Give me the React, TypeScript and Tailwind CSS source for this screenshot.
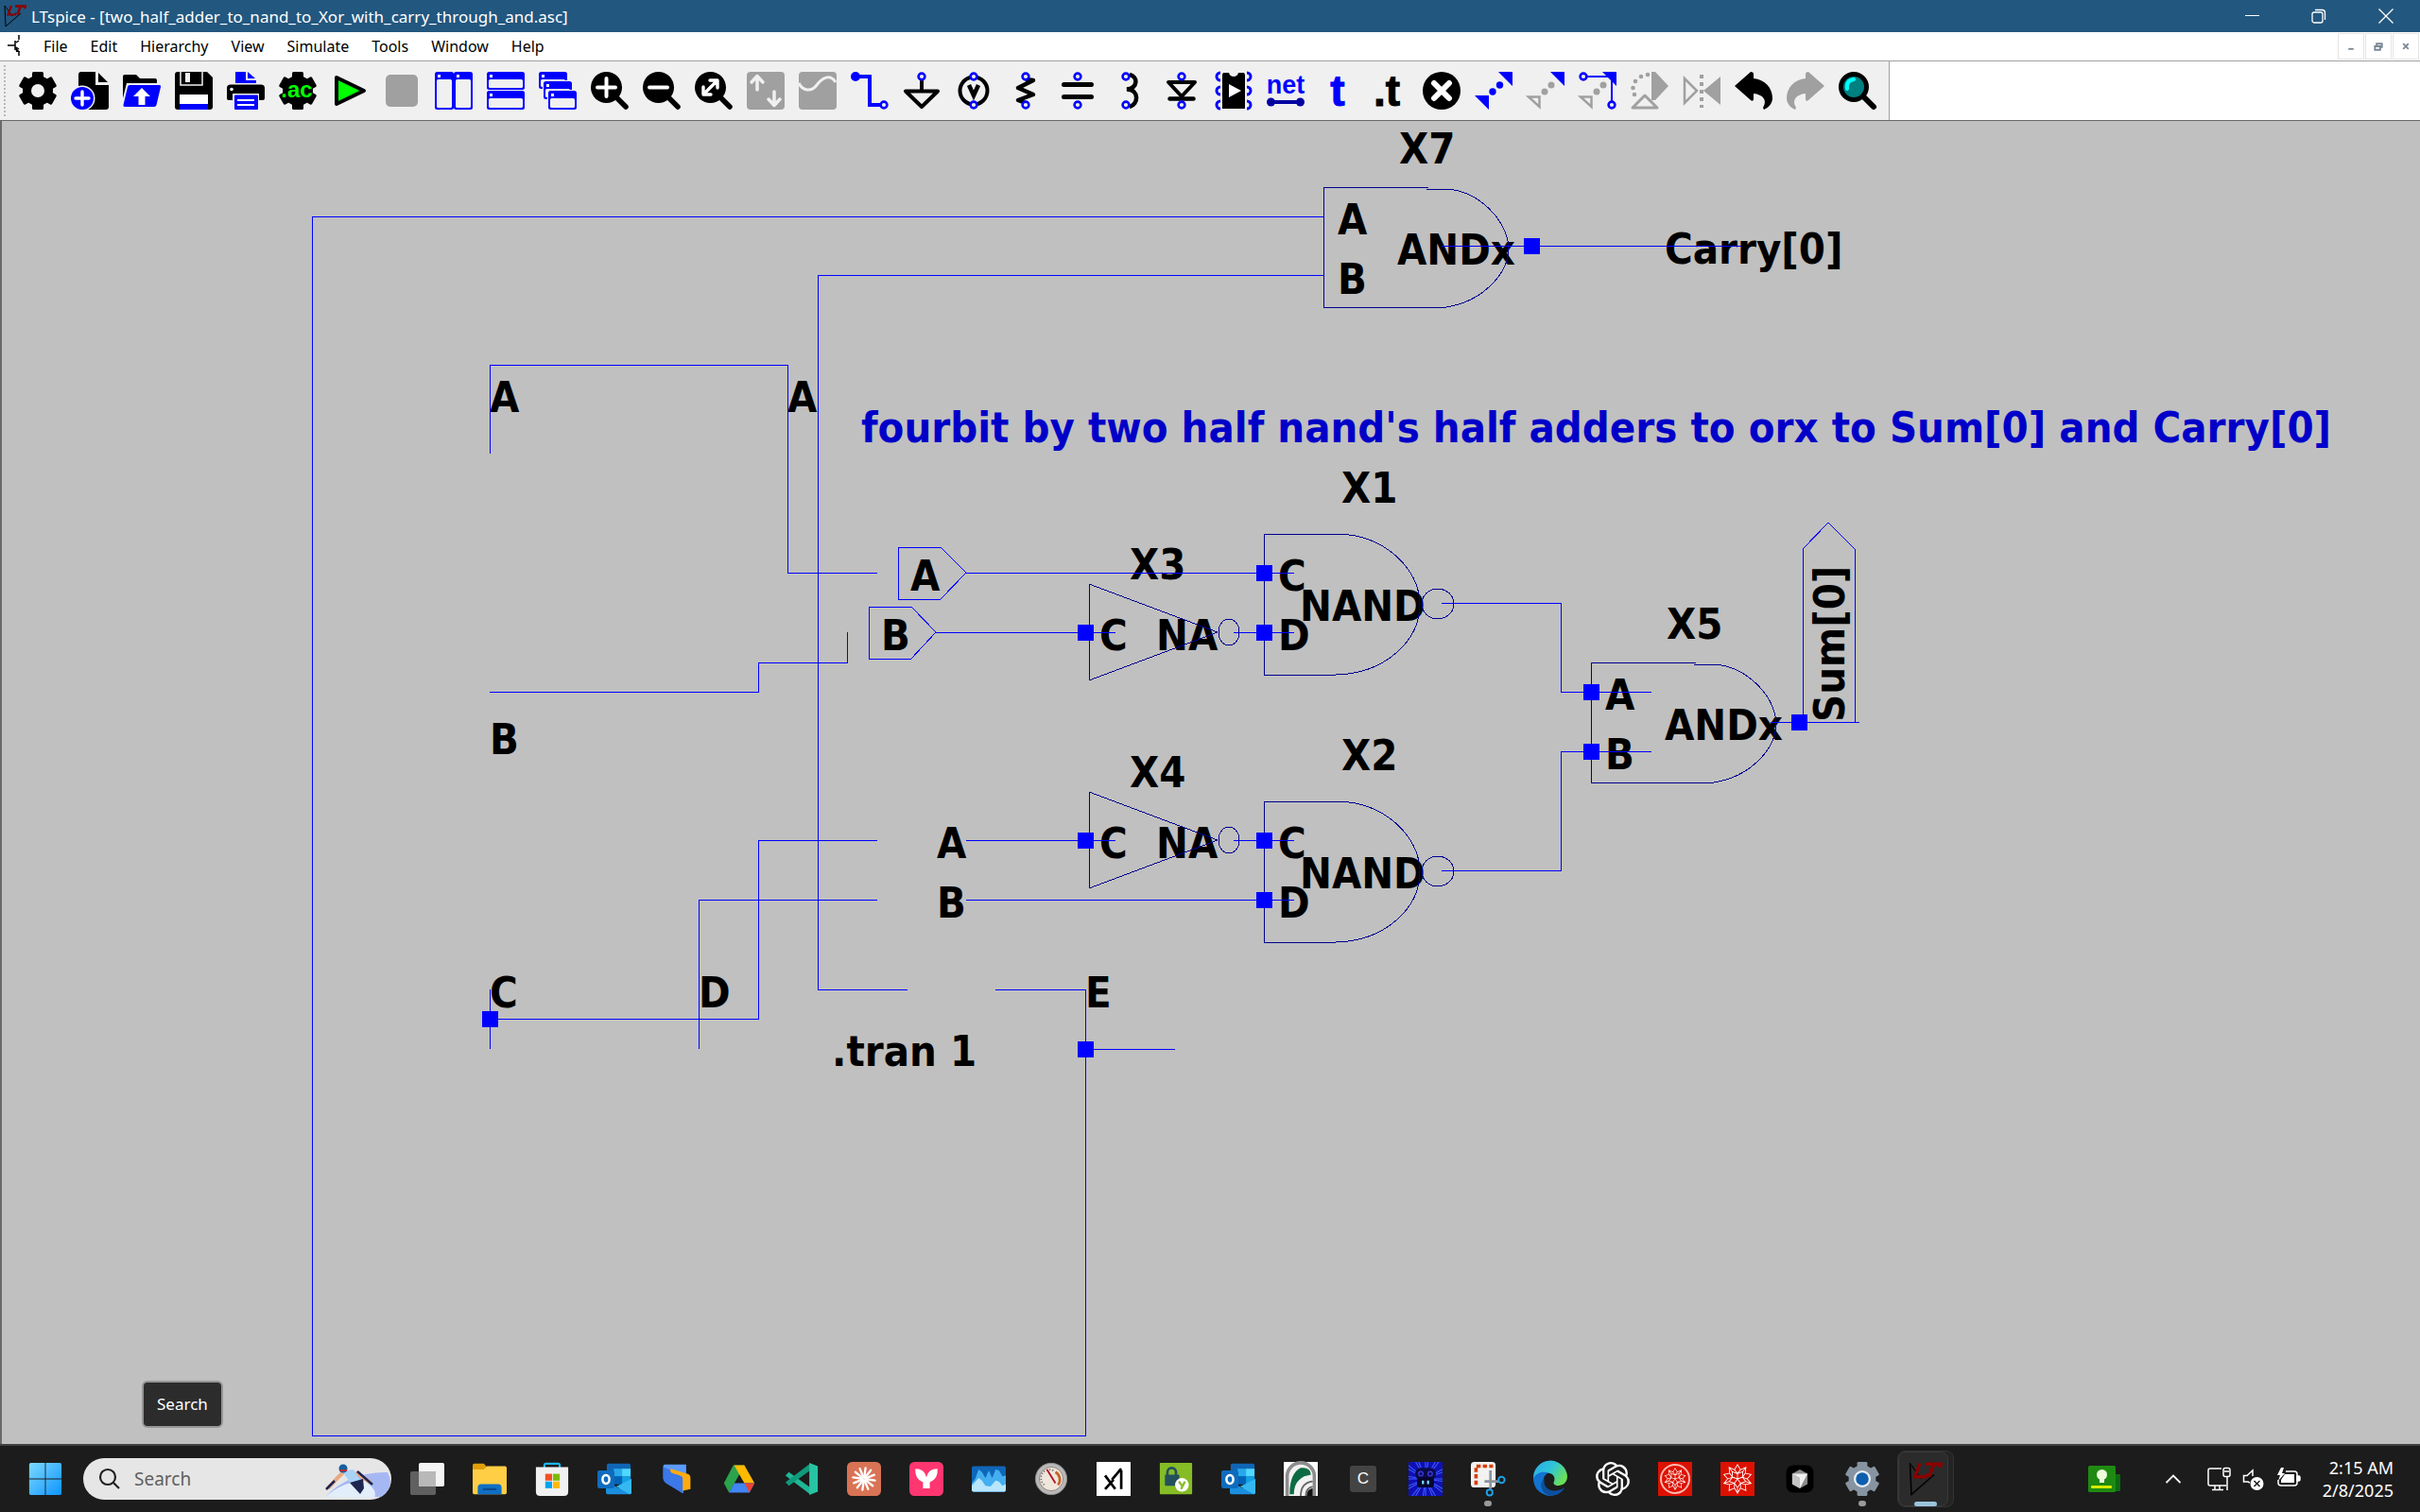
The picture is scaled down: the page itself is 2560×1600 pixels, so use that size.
import React from "react";
import { SiOpenai, SiWolfram } from "react-icons/si";

const BLUE = "#0000ff";
const GRAY = "#a0a0a0";
const FACE = "#f0f0f0";

type Kids = { children?: React.ReactNode };

function Glyph({ children, size = "size-10" }: Kids & { size?: string }) {
  return (
    <svg viewBox="0 0 40 40" className={`${size} block shrink-0 overflow-visible`} fill="none" aria-hidden="true">
      {children}
    </svg>
  );
}

function Ring({ x, y }: { x: number; y: number }) {
  return <circle cx={x} cy={y} r="3.4" fill={FACE} stroke={BLUE} strokeWidth="2.6" />;
}

function GearShape({ fill = "#000" }: { fill?: string }) {
  return (
    <g fill={fill}>
      <circle cx="20" cy="20" r="16" />
      <rect x="14" y="0" width="12" height="40" rx="1.5" />
      <rect x="14" y="0" width="12" height="40" rx="1.5" transform="rotate(60 20 20)" />
      <rect x="14" y="0" width="12" height="40" rx="1.5" transform="rotate(120 20 20)" />
    </g>
  );
}

function Win({ x, y, w, h }: { x: number; y: number; w: number; h: number }) {
  return (
    <g>
      <rect x={x} y={y} width={w} height={h} rx="2.5" fill={BLUE} />
      <rect x={x + 2} y={y + 8} width={w - 4} height={h - 10} rx="1.5" fill={FACE} />
      <rect x={x + 3} y={y + 3} width="3" height="3" fill="#fff" />
    </g>
  );
}

function Lens({ children }: Kids) {
  return (
    <Glyph>
      <path d="M27 27L37 37" stroke="#000" strokeWidth="5.5" strokeLinecap="round" />
      <circle cx="16.5" cy="16.5" r="16.5" fill="#000" />
      <g stroke="#fff" strokeWidth="4" strokeLinecap="round" strokeLinejoin="round">{children}</g>
    </Glyph>
  );
}

function UndoPath({ fill }: { fill: string }) {
  return (
    <path
      d="M0 15L17 0C19 0 20 1 20 2V7C32 8 40 17 40 28C40 33 36 38 31 40L30 38C35 30 30 24 20 23V29C20 31 18 31 17 30Z"
      fill={fill}
    />
  );
}

const tools: { name: string; icon: React.ReactNode }[] = [
  {
    name: "Settings",
    icon: (
      <Glyph>
        <GearShape />
        <circle cx="20" cy="20" r="7" fill={FACE} />
      </Glyph>
    ),
  },
  {
    name: "New schematic",
    icon: (
      <Glyph>
        <path d="M8 3Q8 0 11 0H26V14H40V37Q40 40 37 40H8Z" fill="#000" />
        <path d="M29 1L39 11H29Z" fill="#000" />
        <circle cx="12" cy="28" r="13.5" fill={FACE} />
        <circle cx="12" cy="28" r="12" fill={BLUE} />
        <path d="M12 21V35M5 28H19" stroke="#fff" strokeWidth="3.4" strokeLinecap="round" />
      </Glyph>
    ),
  },
  {
    name: "Open",
    icon: (
      <Glyph>
        <path d="M0 5Q0 3 2 3H14L18 7H34Q36 7 36 9V12H4L0 28Z" fill="#000" />
        <path d="M7 14H38.5Q40.500 14 40 16L35.500 35Q35 37 33 37H2Q0 37 0.500 35L5 16Q5.500 14 7 14Z" fill={BLUE} />
        <path d="M20 17L29 26H23.500V35H16.500V26H11Z" fill="#fff" />
      </Glyph>
    ),
  },
  {
    name: "Save",
    icon: (
      <Glyph>
        <path d="M0 3Q0 0 3 0H34L40 6V37Q40 40 37 40H3Q0 40 0 37Z" fill="#000" />
        <path d="M6 0V14H29V0" stroke={FACE} strokeWidth="1.500" />
        <rect x="11" y="1" width="5" height="10" fill={FACE} />
        <rect x="5" y="24" width="30" height="10" fill="#fff" />
        <rect x="5" y="34" width="30" height="6" fill={BLUE} />
      </Glyph>
    ),
  },
  {
    name: "Print",
    icon: (
      <Glyph>
        <path d="M9 0H20V9H31V12H9Z" fill={BLUE} />
        <path d="M22 0L30 7H22Z" fill={BLUE} />
        <path d="M0 17Q0 13.500 4 13.500H36Q40 13.500 40 17V28Q40 30 38 30H2Q0 30 0 28Z" fill="#000" />
        <circle cx="5" cy="18.500" r="1.800" fill="#fff" />
        <rect x="6" y="23" width="28" height="17" fill={FACE} />
        <rect x="8" y="24.500" width="25" height="15.500" rx="1" fill={BLUE} />
        <path d="M11 30H29M11 35H29" stroke="#fff" strokeWidth="2" />
      </Glyph>
    ),
  },
  {
    name: "AC analysis",
    icon: (
      <Glyph>
        <GearShape />
        <text x="19" y="27" textAnchor="middle" fontFamily="Liberation Sans" fontWeight="bold" fontSize="24" fill="#00ff00">
          .ac
        </text>
      </Glyph>
    ),
  },
  {
    name: "Run",
    icon: (
      <Glyph>
        <path d="M6 6V34L35 20Z" fill="#00ff00" stroke="#000" strokeWidth="4" strokeLinejoin="round" />
      </Glyph>
    ),
  },
  { name: "Stop", icon: <Glyph><rect x="3" y="3" width="34" height="34" rx="5" fill={GRAY} /></Glyph> },
  { name: "Tile vertically", icon: <Glyph><Win x={0} y={0} w={20} h={40} /><Win x={20} y={0} w={20} h={40} /></Glyph> },
  { name: "Tile horizontally", icon: <Glyph><Win x={0} y={0} w={40} h={19} /><Win x={0} y={20} w={40} h={20} /></Glyph> },
  {
    name: "Cascade",
    icon: (
      <Glyph>
        <Win x={0} y={0} w={30} h={18} />
        <rect x="4" y="9" width="31" height="21" rx="2" fill={FACE} />
        <Win x={5} y={10} w={30} h={19} />
        <rect x="9" y="19" width="31" height="21" rx="2" fill={FACE} />
        <Win x={10} y={20} w={30} h={20} />
      </Glyph>
    ),
  },
  { name: "Zoom in", icon: <Lens><path d="M16.500 7V26M7 16.500H26" /></Lens> },
  { name: "Zoom out", icon: <Lens><path d="M7 16.500H26" /></Lens> },
  { name: "Zoom to fit", icon: <Lens><path d="M10 23L23 10M16 9H24V17M9 16V24H17" strokeWidth="3.400" /></Lens> },
  {
    name: "Autorange",
    icon: (
      <Glyph>
        <rect width="40" height="40" rx="4" fill={GRAY} />
        <path d="M11 19V5M5 11L11 4.500L17 11M29 21V35M23 29L29 35.500L35 29" stroke={FACE} strokeWidth="3.500" strokeLinecap="round" strokeLinejoin="round" />
      </Glyph>
    ),
  },
  {
    name: "Waveform",
    icon: (
      <Glyph>
        <rect width="40" height="40" rx="4" fill={GRAY} />
        <path d="M0 12C4 20 13 22 19 14S33 2 39 11" stroke={FACE} strokeWidth="3" />
      </Glyph>
    ),
  },
  {
    name: "Wire",
    icon: (
      <Glyph>
        <path d="M5 5H20V35H31" stroke={BLUE} strokeWidth="4" />
        <circle cx="5" cy="5" r="5" fill={BLUE} />
        <Ring x={35} y={35} />
      </Glyph>
    ),
  },
  {
    name: "Ground",
    icon: (
      <Glyph>
        <path d="M20 8V20M3 20.500H37L20 37Z" stroke="#000" strokeWidth="4" strokeLinejoin="round" />
        <Ring x={20} y={5} />
      </Glyph>
    ),
  },
  {
    name: "Voltage source",
    icon: (
      <Glyph>
        <circle cx="20" cy="20" r="14.500" stroke="#000" strokeWidth="4" />
        <path d="M15 14L20 25L25 14" stroke="#000" strokeWidth="4.500" />
        <Ring x={20} y={5} />
        <Ring x={20} y={35} />
      </Glyph>
    ),
  },
  {
    name: "Resistor",
    icon: (
      <Glyph>
        <path d="M20 8L28 9L12 17L28 24L12 30L20 33" stroke="#000" strokeWidth="4.500" strokeLinejoin="round" />
        <Ring x={20} y={5} />
        <Ring x={20} y={35} />
      </Glyph>
    ),
  },
  {
    name: "Capacitor",
    icon: (
      <Glyph>
        <path d="M5.500 13.500H34.500M5.500 26.500H34.500" stroke="#000" strokeWidth="5" strokeLinecap="round" />
        <Ring x={20} y={5} />
        <Ring x={20} y={35} />
      </Glyph>
    ),
  },
  {
    name: "Inductor",
    icon: (
      <Glyph>
        <path d="M20 3C29 5 29 17 17 18.500C31 19 29 35 20 37" stroke="#000" strokeWidth="4.500" />
        <Ring x={16} y={5} />
        <Ring x={16} y={35} />
      </Glyph>
    ),
  },
  {
    name: "Diode",
    icon: (
      <Glyph>
        <path d="M6 11H34L20 26Z" stroke="#000" strokeWidth="4" strokeLinejoin="round" />
        <path d="M7.500 28.500H32.500" stroke="#000" strokeWidth="4.500" strokeLinecap="round" />
        <Ring x={20} y={5} />
        <Ring x={20} y={35} />
      </Glyph>
    ),
  },
  {
    name: "Component",
    icon: (
      <Glyph>
        <g stroke={BLUE} strokeWidth="3">
          <path d="M6 1A4 4 0 0 0 6 9M6 16A4 4 0 0 0 6 24M6 31A4 4 0 0 0 6 39" />
          <path d="M34 1A4 4 0 0 1 34 9M34 16A4 4 0 0 1 34 24M34 31A4 4 0 0 1 34 39" />
        </g>
        <path d="M8 3L9 1H15Q16 5 20 5T25 1H31L32 3V39H8Z" fill="#000" />
        <path d="M15 13L28 20L15 27Z" fill="#fff" />
      </Glyph>
    ),
  },
  {
    name: "Net name",
    icon: (
      <Glyph>
        <text x="20" y="23" textAnchor="middle" fontFamily="Liberation Sans" fontWeight="bold" fontSize="27" fill={BLUE}>
          net
        </text>
        <path d="M5 32H35" stroke="#0000a0" strokeWidth="4" />
        <circle cx="4.500" cy="32" r="4.500" fill="#0000a0" />
        <circle cx="35.500" cy="32" r="4.500" fill="#0000a0" />
      </Glyph>
    ),
  },
  {
    name: "Text",
    icon: (
      <Glyph>
        <text x="20" y="36" textAnchor="middle" fontFamily="Liberation Sans" fontWeight="bold" fontSize="46" fill={BLUE} stroke={BLUE}>
          t
        </text>
      </Glyph>
    ),
  },
  {
    name: "SPICE directive",
    icon: (
      <Glyph>
        <text x="17" y="36" textAnchor="middle" fontFamily="Liberation Sans" fontWeight="bold" fontSize="46" fill="#000" stroke="#000">
          .t
        </text>
      </Glyph>
    ),
  },
  {
    name: "Delete",
    icon: (
      <Glyph>
        <circle cx="20" cy="20" r="20" fill="#000" />
        <path d="M12 12L28 28M28 12L12 28" stroke="#fff" strokeWidth="6" strokeLinecap="round" />
      </Glyph>
    ),
  },
  {
    name: "Duplicate",
    icon: (
      <Glyph>
        <path d="M0 25H15V40ZM25 0H40V15Z" fill={BLUE} />
        <circle cx="19" cy="21" r="3.700" fill={BLUE} />
        <circle cx="26.500" cy="14" r="3.700" fill={BLUE} />
      </Glyph>
    ),
  },
  {
    name: "Move",
    icon: (
      <Glyph>
        <path d="M2 26.500H13.500V37Z" stroke={GRAY} strokeWidth="2.500" />
        <circle cx="19" cy="21" r="3.500" fill={GRAY} />
        <circle cx="26" cy="14" r="3.500" fill={GRAY} />
        <path d="M25 0H40V15Z" fill={BLUE} />
      </Glyph>
    ),
  },
  {
    name: "Drag",
    icon: (
      <Glyph>
        <path d="M2 26.500H13.500V37Z" stroke={GRAY} strokeWidth="2.500" />
        <circle cx="19" cy="21" r="3.500" fill={GRAY} />
        <circle cx="26" cy="14" r="3.500" fill={GRAY} />
        <path d="M9 5H35V32" stroke={BLUE} strokeWidth="2" />
        <path d="M25 0H40V15Z" fill={BLUE} />
        <Ring x={5} y={5} />
        <Ring x={35} y={35} />
      </Glyph>
    ),
  },
  {
    name: "Rotate",
    icon: (
      <Glyph>
        <path d="M22 0H26L40 15L26 30H22Z" fill={GRAY} />
        <path d="M2 38H28L15 25Z" stroke={GRAY} strokeWidth="3" strokeLinejoin="round" />
        <g fill={GRAY}>
          <circle cx="18" cy="3" r="2.300" />
          <circle cx="11" cy="5" r="2.300" />
          <circle cx="5" cy="10" r="2.300" />
          <circle cx="2.500" cy="17" r="2.300" />
          <circle cx="4" cy="24" r="2.300" />
        </g>
      </Glyph>
    ),
  },
  {
    name: "Mirror",
    icon: (
      <Glyph>
        <path d="M2 7V33L15 20Z" stroke={GRAY} strokeWidth="2.500" />
        <path d="M40 5V35L22 20Z" fill={GRAY} />
        <path d="M20 3V38" stroke={GRAY} strokeWidth="4" strokeDasharray="4 4" />
      </Glyph>
    ),
  },
  { name: "Undo", icon: <Glyph><UndoPath fill="#000" /></Glyph> },
  { name: "Redo", icon: <Glyph><g transform="translate(40 0) scale(-1 1)"><UndoPath fill={GRAY} /></g></Glyph> },
  {
    name: "Find",
    icon: (
      <Glyph>
        <path d="M27 27L37 37" stroke="#000" strokeWidth="6" strokeLinecap="round" />
        <circle cx="16" cy="16" r="13.500" fill="#008080" stroke="#000" strokeWidth="5" />
        <path d="M9 18Q8 9 16 8" stroke="#00ffff" strokeWidth="4" strokeLinecap="round" />
      </Glyph>
    ),
  },
];

function LtLogo({ size = "size-6" }: { size?: string }) {
  return (
    <svg viewBox="0 0 24 24" className={`${size} block shrink-0`} fill="none" aria-hidden="true">
      <path d="M1 1L2 23L18 9" stroke="#000" strokeWidth="1" />
      <path d="M1 1L9 12" stroke="#000" strokeWidth="0.800" />
      <path d="M8 1L4.500 10.500H12L13 8.500" stroke="#8b0000" strokeWidth="2.200" />
      <path d="M12 1.500H23L22 4M17.500 2L14.500 10.500" stroke="#8b0000" strokeWidth="2.400" />
    </svg>
  );
}

function TitleBar() {
  return (
    <header className="flex h-[34px] items-center bg-[#22577f] text-white">
      <span className="pr-[5px] pl-1"><LtLogo /></span>
      <h1 className="flex-1 truncate pt-px text-[17px] font-normal">
        LTspice - [two_half_adder_to_nand_to_Xor_with_carry_through_and.asc]
      </h1>
      <button aria-label="Minimize" className="flex h-full w-[70px] items-center justify-center">
        <svg viewBox="0 0 16 16" className="size-4" stroke="#fff"><path d="M0 7.500H15" shapeRendering="crispEdges" /></svg>
      </button>
      <button aria-label="Restore" className="flex h-full w-[70px] items-center justify-center">
        <svg viewBox="0 0 16 16" className="size-4" stroke="#fff" fill="none" strokeWidth="1.300">
          <rect x="1" y="4" width="11" height="11" rx="2" />
          <path d="M4 1.500H11.500Q14.500 1.500 14.500 4.500V12" />
        </svg>
      </button>
      <button aria-label="Close" className="flex h-full w-[72px] items-center justify-center">
        <svg viewBox="0 0 16 16" className="size-4" stroke="#fff" strokeWidth="1.300"><path d="M0.500 0.500L15.500 15.500M15.500 0.500L0.500 15.500" /></svg>
      </button>
    </header>
  );
}

const menus = ["File", "Edit", "Hierarchy", "View", "Simulate", "Tools", "Window", "Help"];

function MenuBar() {
  return (
    <div className="flex h-[31px] items-start border-b border-[#a0a0a0] bg-white">
      <svg viewBox="0 0 24 28" className="mx-2 h-7 w-6" stroke="#000" fill="none" strokeWidth="1.500" aria-hidden="true">
        <path d="M0 14H8M8 9V19M9 11L12 9M12 3V8M9 16L12 18M12 20V25" />
        <path d="M8 15L13 21H9Z" fill="#000" stroke="none" />
      </svg>
      <nav className="flex h-[30px] flex-1 items-center gap-6 pl-[6px]">
        {menus.map((m) => (
          <button key={m} className="text-[16px] text-black">{m}</button>
        ))}
      </nav>
      <div className="flex gap-px pt-px pr-px">
        {[
          { n: "Minimize document", d: "M11 17H17" },
          { n: "Restore document", d: "M10 14H16V18H10ZM12 13V11H18V15H16" },
          { n: "Close document", d: "M11 11L17 17M17 11L11 17" },
        ].map((b) => (
          <button key={b.n} aria-label={b.n} className="size-7 border border-[#e4e4e4]">
            <svg viewBox="0 0 28 28" className="size-full" stroke="#7a8896" strokeWidth="2" fill="none"><path d={b.d} /></svg>
          </button>
        ))}
      </div>
    </div>
  );
}

function ToolBar() {
  return (
    <div className="flex h-[62px] bg-white">
      <div className="flex items-center gap-[15px] border-r border-[#a0a0a0] bg-[#f0f0f0] pr-[13px]" role="toolbar" aria-label="Schematic tools">
        <span className="-mr-px ml-1 h-[54px] border-l-2 border-dotted border-[#b8b8b8]" />
        {tools.map((t) => (
          <button key={t.name} aria-label={t.name} title={t.name}>{t.icon}</button>
        ))}
      </div>
    </div>
  );
}

function Label({ x, y, children }: Kids & { x: number; y: number }) {
  return <text x={x} y={y}>{children}</text>;
}

function Node({ x, y }: { x: number; y: number }) {
  return <rect x={x - 8} y={y - 8} width="17" height="17" fill={BLUE} stroke="none" />;
}

function AndGate({ x, y, name }: { x: number; y: number; name: string }) {
  return (
    <g transform={`translate(${x} ${y})`}>
      <g fill="#000">
        <Label x={80} y={-25}>{name}</Label>
        <Label x={15} y={50}>A</Label>
        <Label x={15} y={113}>B</Label>
        <Label x={78} y={82}>ANDx</Label>
      </g>
      <path d="M111 0H0V127H130C168 121 196 92 196 64C194 35 165 4 130 2H109" stroke="#000090" fill="none" />
    </g>
  );
}

function NandGate({ x, y, name }: { x: number; y: number; name: string }) {
  return (
    <g transform={`translate(${x} ${y})`}>
      <g fill="#000">
        <Label x={82} y={-33}>{name}</Label>
        <Label x={15} y={60}>C</Label>
        <Label x={15} y={123}>D</Label>
        <Label x={38} y={92}>NAND</Label>
      </g>
      <path d="M0 0V149H76C126 148 165 115 165 74C165 38 128 0 76 0Z" stroke="#000090" fill="none" />
      <ellipse cx="184" cy="74" rx="17" ry="16" stroke="#000090" fill="none" />
    </g>
  );
}

function Inverter({ x, y, name }: { x: number; y: number; name: string }) {
  return (
    <g transform={`translate(${x} ${y})`}>
      <g fill="#000">
        <Label x={43} y={-56}>{name}</Label>
        <Label x={11} y={19}>C</Label>
        <Label x={71} y={19}>NA</Label>
      </g>
      <path d="M0 -51V51L136 0Z" stroke="#000090" fill="none" />
      <ellipse cx="148" cy="0" rx="11" ry="14" stroke="#000090" fill="none" />
    </g>
  );
}

const wires = [
  "M1401 101H330V1391H1148V919H1053",
  "M1401 163H865V919H960",
  "M518 352V258H833V478H928",
  "M518 604H802V573H896V541",
  "M518 919V982M518 950H802V761H928",
  "M739 982V824H928",
  "M1148 982H1243",
  "M1022 478H1369",
  "M990 541H1180M1305 541H1369",
  "M1022 761H1180M1305 761H1369",
  "M1022 824H1369",
  "M1525 510H1651V604H1747",
  "M1525 793H1651V667H1747",
  "M1873 636H1967",
  "M1525 132H1842",
  "M950 451H995L1022 478L995 506H950Z",
  "M919 514H964L990 541L964 569H919Z",
  "M1907 636V453L1934 425L1962 453V636",
];

const nodes = [
  [518, 950], [1148, 982], [1148, 541], [1148, 761], [1337, 478], [1337, 541], [1337, 761], [1337, 824],
  [1683, 604], [1683, 667], [1903, 636], [1620, 132],
];

const netLabels: [number, number, string][] = [
  [518, 308, "A"], [833, 308, "A"], [518, 670, "B"], [518, 938, "C"], [739, 938, "D"], [1148, 938, "E"],
  [963, 497, "A"], [932, 560, "B"], [991, 780, "A"], [991, 843, "B"], [880, 1000, ".tran 1"], [1761, 151, "Carry[0]"],
];

function Schematic() {
  return (
    <main className="relative flex-1 border-t border-l-2 border-[#696969] bg-[#c0c0c0]">
      <svg
        viewBox="2 0 2558 1400"
        preserveAspectRatio="xMinYMin meet"
        className="block w-full text-[45px] font-bold"
        fontFamily="'DejaVu Sans Condensed', 'Noto Sans', sans-serif"
        aria-label="Schematic"
      >
        <g fill="#000">
          {netLabels.map(([x, y, t]) => <Label key={`${x}-${y}`} x={x} y={y}>{t}</Label>)}
          <text transform="translate(1951 636) rotate(-90)">Sum[0]</text>
        </g>
        <text x="911" y="340" fill="#0000c8">
          fourbit by two half nand's half adders to orx to Sum[0] and Carry[0]
        </text>
        <g shapeRendering="crispEdges">
          <AndGate x={1400} y={70} name="X7" />
          <AndGate x={1683} y={573} name="X5" />
          <NandGate x={1337} y={437} name="X1" />
          <NandGate x={1337} y={720} name="X2" />
          <Inverter x={1152} y={541} name="X3" />
          <Inverter x={1152} y={761} name="X4" />
          {wires.map((d) => <path key={d} d={d} stroke={BLUE} fill="none" />)}
          {nodes.map(([x, y]) => <Node key={`${x}-${y}`} x={x} y={y} />)}
        </g>
      </svg>
      <div role="tooltip" className="absolute bottom-[17px] left-[148px] rounded-md border-2 border-[#969696] bg-[#2c2c2c] px-[14px] py-[11px] text-[17px] leading-6 text-white">
        Search
      </div>
    </main>
  );
}

function Outlook() {
  return (
    <Glyph size="size-9">
      <rect x="11" y="2" width="28" height="24" rx="2" fill="#1066b5" />
      <rect x="19" y="8" width="10" height="9" fill="#28a8ea" />
      <rect x="29" y="8" width="10" height="9" fill="#50d9ff" />
      <rect x="19" y="17" width="10" height="9" fill="#0364b8" />
      <rect x="29" y="17" width="10" height="9" fill="#14a0e6" />
      <path d="M10 22L25 31L40 20V36Q40 38 38 38H12Q10 38 10 36Z" fill="#1a8fe0" />
      <path d="M40 20V36Q40 38 38 38L22 29Z" fill="#35b8f1" />
      <rect x="0" y="10" width="20" height="21" rx="2" fill="#0f6cbd" />
      <ellipse cx="10" cy="20.500" rx="4" ry="5" stroke="#fff" strokeWidth="2.800" />
    </Glyph>
  );
}

const rays = Array.from({ length: 12 }, (_, i) => i * 30);

const taskIcons: { name: string; dot?: boolean; icon: React.ReactNode }[] = [
  {
    name: "Task View",
    icon: (
      <Glyph size="size-9">
        <rect x="0" y="11" width="30" height="28" rx="2" fill="#606060" />
        <rect x="10" y="1" width="30" height="28" rx="2" fill="#f4f4f4" />
        <path d="M10 11H30V29H12Q10 29 10 27Z" fill="#b9b9b9" />
      </Glyph>
    ),
  },
  {
    name: "File Explorer",
    icon: (
      <Glyph size="size-9">
        <path d="M0 4Q0 2 2 2H13L17 6V12H0Z" fill="#e09e0a" />
        <path d="M0 9H13L17 5H38Q40 5 40 7V36Q40 38 38 38H2Q0 38 0 36Z" fill="#ffce45" />
        <path d="M6 38V30Q6 26 10 26H30Q34 26 34 30V38Z" fill="#0f6fc6" />
        <path d="M13 32H27" stroke="#0a4a8c" strokeWidth="2.400" strokeLinecap="round" />
      </Glyph>
    ),
  },
  {
    name: "Microsoft Store",
    icon: (
      <Glyph size="size-9">
        <path d="M11 8V4Q11 2 13 2H27Q29 2 29 4V8" stroke="#1db4f0" strokeWidth="2.500" />
        <path d="M1 6H39V35Q39 40 34 40H6Q1 40 1 35Z" fill="#f1f1f1" />
        <rect x="12" y="14" width="8" height="8" fill="#f25022" />
        <rect x="21" y="14" width="8" height="8" fill="#7fba00" />
        <rect x="12" y="23" width="8" height="8" fill="#00a4ef" />
        <rect x="21" y="23" width="8" height="8" fill="#ffb900" />
      </Glyph>
    ),
  },
  { name: "Outlook", icon: <Outlook /> },
  {
    name: "Files",
    icon: (
      <Glyph size="size-9">
        <path d="M4 5Q4 3 6 3H31V22L27 37L7 24Q4 22 4 19Z" fill="#5b9bff" />
        <path d="M4 6L24 14Q27 15 27 18V37L7 25Q4 23 4 20Z" fill="#3b78e8" />
        <path d="M13 8L32 14Q36 15 36 19V32L27 34V20Q27 17 24 16L14 13Q11 10 13 8Z" fill="#ffab10" />
      </Glyph>
    ),
  },
  {
    name: "Google Drive",
    icon: (
      <Glyph size="size-9">
        <path d="M13 4H26L20 15L8 36L2 25Z" fill="#2ba24c" />
        <path d="M14 4H26L38 25H26Z" fill="#ffba00" />
        <path d="M8 36L14 25H38L32 36Z" fill="#4285f4" />
        <path d="M26 25H38L32 36Z" fill="#ea4335" />
      </Glyph>
    ),
  },
  {
    name: "Visual Studio Code",
    icon: (
      <Glyph size="size-9">
        <path d="M1 16L5 12L30 30V38Z" fill="#1fb795" />
        <path d="M1 24L5 28L30 10V2Z" fill="#0f9a7c" />
        <path d="M29 1L39 5V35L29 39Z" fill="#28c3a3" />
      </Glyph>
    ),
  },
  {
    name: "Claude",
    icon: (
      <Glyph size="size-9">
        <rect width="40" height="40" rx="6" fill="#d97355" />
        <g stroke="#fff" strokeWidth="2.600" strokeLinecap="round">
          {rays.map((a) => <path key={a} d="M20 18V7" transform={`rotate(${a + 8} 20 20)`} />)}
        </g>
      </Glyph>
    ),
  },
  {
    name: "Y app",
    icon: (
      <Glyph size="size-9">
        <rect width="40" height="40" rx="6" fill="#ff3670" />
        <path d="M7 8Q18 8 20 18Q22 8 33 8Q34 20 24 24V31H16V24Q6 20 7 8Z" fill="#fff" />
      </Glyph>
    ),
  },
  {
    name: "Resource Monitor",
    icon: (
      <Glyph size="size-9">
        <rect y="5" width="40" height="30" rx="2" fill="#0f66b8" />
        <path d="M0 25L4 20L8 9L12 12L16 19L20 10L24 19L28 9L32 10L36 17L40 16V33Q40 35 38 35H2Q0 35 0 33Z" fill="#43aef0" />
        <path d="M0 28L8 19L12 22L16 28L22 29L28 22L32 23L36 28L40 26V33Q40 35 38 35H2Q0 35 0 33Z" fill="#b9e6fd" />
      </Glyph>
    ),
  },
  {
    name: "Gauge",
    icon: (
      <Glyph size="size-9">
        <circle cx="20" cy="20" r="18.500" fill="#b9b9b9" stroke="#8a8a8a" />
        <circle cx="20" cy="20" r="14" fill="#efe6dc" stroke="#8c8078" />
        <path d="M12 27A10 10 0 1 1 24 11" stroke="#777" strokeWidth="2" strokeDasharray="1.500 2" />
        <path d="M25 12A10 10 0 0 1 28 27" stroke="#c4622a" strokeWidth="3" />
        <path d="M15 9L25 25" stroke="#b3121d" strokeWidth="2" />
      </Glyph>
    ),
  },
  {
    name: "xAI",
    icon: (
      <Glyph size="size-9">
        <rect width="40" height="40" fill="#fff" />
        <path d="M10 16L22 32M20 21L10 32M18 21L29 8M29 10V32" stroke="#000" strokeWidth="3" />
      </Glyph>
    ),
  },
  {
    name: "Password Safe",
    icon: (
      <Glyph size="size-9">
        <rect x="1" y="1" width="38" height="37" rx="1" fill="#86bc25" />
        <path d="M10 16V12A5 5 0 0 1 20 12V16" stroke="#24505c" strokeWidth="3" />
        <rect x="7" y="15" width="17" height="13" rx="1" fill="#24505c" />
        <circle cx="27" cy="27" r="8" fill="#fff" />
        <path d="M23.500 23L27 28M30.500 23L26 32" stroke="#86bc25" strokeWidth="2.600" />
      </Glyph>
    ),
  },
  { name: "Outlook (new)", icon: <Outlook /> },
  {
    name: "Portal",
    icon: (
      <Glyph size="size-9">
        <rect width="40" height="40" fill="#fff" />
        <path d="M4 40V17A16 16 0 0 1 36 17V40" fill="#f2f2f2" stroke="#8d8d8d" strokeWidth="4" />
        <path d="M7 38C7 20 12 11 20 7Q28 6 31 11L32 15L24 17C15 22 12 29 12 38Z" fill="#0d6b43" />
        <path d="M20 40C20 30 25 24 34 23M26 40C26 34 29 30 34 29" stroke="#666" strokeWidth="2" />
        <path d="M27 40C27 35 30 31 34 31V40Z" fill="#111" />
      </Glyph>
    ),
  },
  {
    name: "C app",
    icon: (
      <span className="flex size-7 items-center justify-center rounded-[3px] bg-[#444] font-['Liberation_Sans'] text-[17px] text-white">C</span>
    ),
  },
  {
    name: "Robot",
    icon: (
      <svg viewBox="0 0 40 40" className="block size-9 overflow-hidden" fill="none" aria-hidden="true">
        <rect width="40" height="40" fill="#1010b4" />
        <g stroke="#3c5cff" strokeWidth="1.200">
          {rays.map((a) => <path key={a} d="M20 20V-8M20 20L24 -8" transform={`rotate(${a} 20 20)`} />)}
        </g>
        <rect x="8" y="7" width="24" height="14" rx="6" fill="#0a0a4a" />
        <rect x="10" y="18" width="20" height="12" rx="4" fill="#06062c" />
        <circle cx="14.500" cy="14" r="2.600" stroke="#3838e0" strokeWidth="1.500" />
        <circle cx="25.500" cy="14" r="2.600" stroke="#3838e0" strokeWidth="1.500" />
        <path d="M17 22V26M23 22V26" stroke="#7be6ff" strokeWidth="2.400" />
      </svg>
    ),
  },
  {
    name: "Snipping Tool",
    dot: true,
    icon: (
      <Glyph size="size-9">
        <rect x="0" y="0" width="29" height="30" rx="4" fill="#f2f2f2" />
        <path d="M6 27V5H26" stroke="#d83b01" strokeWidth="4" strokeDasharray="5 2.500" />
        <path d="M23 10V32M16 23H33" stroke="#8b939c" strokeWidth="3" />
        <circle cx="36" cy="21" r="3.600" stroke="#1f9fe4" strokeWidth="2.200" />
        <circle cx="22" cy="36" r="3.400" stroke="#1f9fe4" strokeWidth="2.200" />
      </Glyph>
    ),
  },
  {
    name: "Edge",
    icon: (
      <Glyph size="size-9">
        <defs>
          <linearGradient id="edgeTop" x1="0" y1="0" x2="1" y2="0.500">
            <stop offset="0" stopColor="#2aa9e8" />
            <stop offset="0.550" stopColor="#2fc4d8" />
            <stop offset="1" stopColor="#6ade5a" />
          </linearGradient>
        </defs>
        <path d="M0 20A20 20 0 0 1 40 17C40 25 34 28 28 28Q23 27 24 24C27 18 23 13 17 13C9 13 2 17 0 20Z" fill="url(#edgeTop)" />
        <path d="M0 20C2 13 12 10 18 13C14 14 11 19 12 25C13 33 21 38 30 37A20 20 0 0 1 0 20Z" fill="#1273d0" />
        <path d="M13 20C11 30 20 36 30 33Q35 32 37 30C33 38 24 41 17 39C8 35 7 24 13 20Z" fill="#0c4f9c" />
      </Glyph>
    ),
  },
  { name: "ChatGPT", icon: <SiOpenai className="size-9 text-white" /> },
  {
    name: "Wolfram",
    icon: (
      <span className="flex size-9 items-center justify-center bg-[#dd1100]">
        <span className="flex size-8 items-center justify-center rounded-full border-2 border-[#ffb9b0]">
          <SiWolfram className="size-6 text-white" />
        </span>
      </span>
    ),
  },
  {
    name: "Mathematica",
    icon: (
      <span className="flex size-9 items-center justify-center bg-[#dd1100]">
        <SiWolfram className="size-8 text-white" />
      </span>
    ),
  },
  {
    name: "Cursor",
    icon: (
      <Glyph size="size-9">
        <rect x="4" y="4" width="32" height="32" rx="8" fill="#000" />
        <path d="M20 9L29 14V26L20 31L11 26V14Z" fill="#8c8c8c" />
        <path d="M11 14H29L20 31V19Z" fill="#f0f0f0" />
        <path d="M11 14L20 19V31L11 26Z" fill="#c4c4c4" />
      </Glyph>
    ),
  },
  {
    name: "Settings",
    dot: true,
    icon: (
      <Glyph size="size-9">
        <GearShape fill="#8794a1" />
        <circle cx="20" cy="20" r="10" fill="#e9eef3" />
        <circle cx="20" cy="20" r="7.500" fill="#0f5fae" />
      </Glyph>
    ),
  },
];

function SkierArt() {
  return (
    <svg viewBox="0 0 72 44" className="h-11 w-[72px] shrink-0" aria-hidden="true">
      <path d="M2 41Q28 14 68 15Q76 30 62 41Z" fill="#a6b8f4" />
      <path d="M2 41Q22 24 44 24Q58 34 54 42Z" fill="#e3eefb" />
      <path d="M5 32L14 22L22 14M34 15L50 26" stroke="#e8a982" strokeWidth="4" fill="none" />
      <path d="M20 14L32 12L40 25L30 28Z" fill="#a9d3f6" />
      <path d="M28 26L42 22L43 32L39 38Z" fill="#1d2550" />
      <path d="M3 33L12 24M36 14L52 28" stroke="#1d2550" strokeWidth="2.500" />
      <circle cx="21" cy="11" r="4.500" fill="#12609f" />
      <path d="M17 13H25" stroke="#b0303b" strokeWidth="2" />
    </svg>
  );
}

function TaskBar() {
  return (
    <footer className="flex h-[72px] items-center border-t-2 border-[#404040] bg-[#1c1c1c] text-white">
      <button aria-label="Start" className="ml-[30px]">
        <Glyph size="size-9">
          <defs>
            <linearGradient id="win" x1="0" y1="0" x2="40" y2="40" gradientUnits="userSpaceOnUse">
              <stop offset="0" stopColor="#7fdcff" />
              <stop offset="1" stopColor="#0a92ff" />
            </linearGradient>
          </defs>
          <path d="M1 3Q1 1 3 1H19.500V19.500H1ZM20.500 1H37Q39 1 39 3V19.500H20.500ZM1 20.500H19.500V39H3Q1 39 1 37ZM20.500 20.500H39V37Q39 39 37 39H20.500Z" fill="url(#win)" />
        </Glyph>
      </button>
      <label className="ml-[22px] flex h-11 w-[326px] items-center overflow-hidden rounded-full bg-[#e6e6e6] pl-4">
        <svg viewBox="0 0 24 24" className="size-6 shrink-0" fill="none" stroke="#222" strokeWidth="2.200" aria-hidden="true">
          <circle cx="10" cy="10" r="8" />
          <path d="M16 16L22 22" />
        </svg>
        <input aria-label="Search" placeholder="Search" className="ml-[14px] w-0 flex-1 bg-transparent text-[19px] text-black outline-none placeholder:text-[#5f5f5f]" />
        <SkierArt />
      </label>
      <nav aria-label="Taskbar" className="ml-[5px] flex h-full">
        {taskIcons.map((t) => (
          <button key={t.name} aria-label={t.name} className="relative flex w-[66px] items-center justify-center">
            {t.icon}
            {t.dot && <span className="absolute bottom-[6px] left-[29px] h-[6px] w-2 rounded-full bg-[#9a9a9a]" />}
          </button>
        ))}
        <button aria-label="LTspice" className="relative my-[5px] ml-1 flex w-[60px] items-center justify-center rounded-lg border border-[#333] bg-[#242424]">
          <span className="absolute inset-y-0 right-[5px] left-0 rounded-lg border border-[#3a3a3a] bg-[#2b2b2b]" />
          <span className="relative"><LtLogo size="size-9" /></span>
          <span className="absolute bottom-0 left-[17px] h-[5px] w-6 rounded-full bg-[#9bc5dd]" />
        </button>
      </nav>
      <div className="ml-auto flex items-center pr-7">
        <button aria-label="Learn about this picture">
          <svg viewBox="0 0 36 30" className="h-[30px] w-9" aria-hidden="true">
            <rect x="28" y="10" width="6" height="18" rx="1" fill="#0c6b10" />
            <rect x="0" y="1" width="29" height="28" rx="1.500" fill="#1f8a12" />
            <circle cx="14.500" cy="10.500" r="5.500" fill="#eefcdc" />
            <rect x="12" y="15" width="5" height="4" fill="#eefcdc" />
            <rect x="3" y="22" width="22" height="3" rx="1" fill="#d4ec00" />
          </svg>
        </button>
        <button aria-label="Show hidden icons" className="ml-[46px]">
          <svg viewBox="0 0 16 10" className="h-[10px] w-4" fill="none" stroke="#fff" strokeWidth="1.800"><path d="M0.500 9L8 1.500L15.500 9" /></svg>
        </button>
        <button aria-label="Network, volume and battery" className="ml-[27px] flex items-center gap-3">
          <svg viewBox="0 0 26 26" className="size-[26px]" fill="none" stroke="#fff" strokeWidth="1.500">
            <path d="M16 2H4Q2 2 2 4V18Q2 20 4 20H21M9 20V24M14 20V24M6 24.500H18M22 10V25" />
            <rect x="18" y="1.500" width="7" height="9" rx="2" />
            <path d="M19 5H24" />
          </svg>
          <svg viewBox="0 0 24 24" className="size-6" fill="none" stroke="#fff" strokeWidth="1.500">
            <path d="M8 16L6 15H1.500V8.500H5L11 3V9" />
            <circle cx="15.500" cy="17" r="7" fill="#fff" stroke="none" />
            <path d="M12.500 14L18.500 20M18.500 14L12.500 20" stroke="#1c1c1c" />
          </svg>
          <svg viewBox="0 0 26 24" className="h-6 w-[26px]" fill="none" stroke="#fff" strokeWidth="1.500">
            <path d="M10 4H19Q22 4 22 7V16Q22 19 19 19H5Q2 19 2 16V13" />
            <path d="M9 7H19V16H5V13Z" fill="#fff" stroke="none" />
            <path d="M22 9H24Q25 9 25 11.500T24 14H22Z" fill="#fff" />
            <path d="M5 0L1 8H4L2 14L9 6H6L8 0Z" fill="#fff" stroke="none" />
          </svg>
        </button>
        <time className="ml-[23px] pb-px text-right text-[18px] leading-6">
          2:15 AM
          <br />
          2/8/2025
        </time>
      </div>
    </footer>
  );
}

export default function App() {
  return (
    <div className="flex min-h-screen flex-col bg-[#c0c0c0] font-['Noto_Sans',sans-serif]">
      <TitleBar />
      <MenuBar />
      <ToolBar />
      <Schematic />
      <TaskBar />
    </div>
  );
}
